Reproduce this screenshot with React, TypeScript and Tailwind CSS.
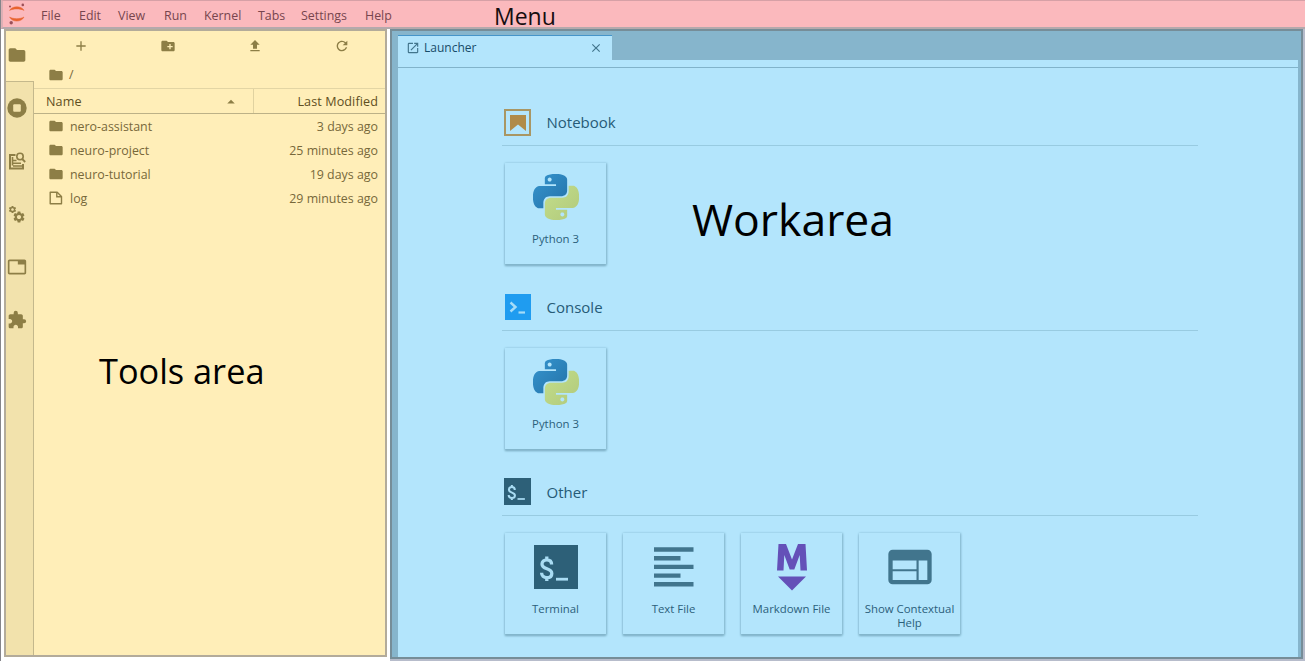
import React from "react";
import {
  MdAdd,
  MdArrowDropUp,
  MdClose,
  MdCreateNewFolder,
  MdExtension,
  MdFileUpload,
  MdFolder,
  MdLaunch,
  MdRefresh,
  MdSettings,
  MdTab,
  MdWeb,
} from "react-icons/md";

const menus = [
  { label: "File", cls: "w-[38px]" },
  { label: "Edit", cls: "w-[39px]" },
  { label: "View", cls: "w-[46px]" },
  { label: "Run", cls: "w-[40px]" },
  { label: "Kernel", cls: "w-[54px]" },
  { label: "Tabs", cls: "w-[43px]" },
  { label: "Settings", cls: "w-[64px]" },
  { label: "Help", cls: "w-[40px]" },
];

const files = [
  { name: "nero-assistant", when: "3 days ago", folder: true },
  { name: "neuro-project", when: "25 minutes ago", folder: true },
  { name: "neuro-tutorial", when: "19 days ago", folder: true },
  { name: "log", when: "29 minutes ago", folder: false },
];

function JupyterLogo() {
  return (
    <svg className="h-[22px] w-[18px]" viewBox="0 0 18 22">
      <path d="M1.600 7.400C4 2.600 13.600 2.600 16 7.400C12.500 5.400 5 5.400 1.600 7.400Z" fill="#e8632f" stroke="#e8632f" strokeWidth="0.500" />
      <path d="M1.600 14C4 19.400 13.600 19.400 16 14C12.500 16.200 5 16.200 1.600 14Z" fill="#e8632f" stroke="#e8632f" strokeWidth="0.500" />
      <circle cx="14.800" cy="1.900" r="1.300" fill="#9b5058" />
      <circle cx="2" cy="3.500" r="1" fill="#9b5058" />
      <circle cx="3.200" cy="19.700" r="1.700" fill="#9b5058" />
    </svg>
  );
}

function PythonLogo() {
  return (
    <svg className="h-[46px] w-[46px]" viewBox="0 0 24 24">
      <defs>
        <linearGradient id="pyBlue" x1="0" y1="0" x2="1" y2="1">
          <stop offset="0" stopColor="#3595cf" />
          <stop offset="1" stopColor="#2472a8" />
        </linearGradient>
        <linearGradient id="pyGreen" x1="0" y1="0" x2="1" y2="1">
          <stop offset="0" stopColor="#c3de8a" />
          <stop offset="1" stopColor="#b1c97c" />
        </linearGradient>
      </defs>
      <path
        fill="url(#pyBlue)"
        d="M14.25.18l.9.2.73.26.59.3.45.32.34.34.25.34.16.33.1.3.04.26.02.2-.01.13V8.5l-.05.63-.13.55-.21.46-.26.38-.3.31-.33.25-.35.19-.35.14-.33.1-.3.07-.26.04-.21.02H8.77l-.69.05-.59.14-.5.22-.41.27-.33.32-.27.35-.2.36-.15.37-.1.35-.07.32-.04.27-.02.21v3.06H3.17l-.21-.03-.28-.07-.32-.12-.35-.18-.36-.26-.36-.36-.35-.46-.32-.59-.28-.73-.21-.88-.14-1.05-.05-1.23.06-1.22.16-1.04.24-.87.32-.71.36-.57.4-.44.42-.33.42-.24.4-.16.36-.1.32-.05.24-.01h.16l.06.01h8.16v-.83H6.18l-.01-2.75-.02-.37.05-.34.11-.31.17-.28.25-.26.31-.23.38-.2.44-.18.51-.15.58-.12.64-.1.71-.06.77-.04.84-.02 1.27.05zm-6.3 1.98l-.23.33-.08.41.08.41.23.34.33.22.41.09.41-.09.33-.22.23-.34.08-.41-.08-.41-.23-.33-.33-.22-.41-.09-.41.09z"
      />
      <path
        fill="url(#pyGreen)"
        d="M21.04 6.11l.28.06.32.12.35.18.36.27.36.35.35.47.32.59.28.73.21.88.14 1.04.05 1.23-.06 1.23-.16 1.04-.24.86-.32.71-.36.57-.4.45-.42.33-.42.24-.4.16-.36.09-.32.05-.24.02-.16-.01h-8.22v.82h5.84l.01 2.76.02.36-.05.34-.11.31-.17.29-.25.25-.31.24-.38.2-.44.17-.51.15-.58.13-.64.09-.71.07-.77.04-.84.01-1.27-.04-1.07-.14-.9-.2-.73-.25-.59-.3-.45-.33-.34-.34-.25-.34-.16-.33-.1-.3-.04-.25-.02-.2.01-.13v-5.34l.05-.64.13-.54.21-.46.26-.38.3-.32.33-.24.35-.2.35-.14.33-.1.3-.06.26-.04.21-.02.13-.01h5.84l.69-.05.59-.14.5-.21.41-.28.33-.32.27-.35.2-.36.15-.36.1-.35.07-.32.04-.28.02-.21V6.07h2.09l.14.01zm-6.47 14.25l-.23.33-.08.41.08.41.23.33.33.23.41.08.41-.08.33-.23.23-.33.08-.41-.08-.41-.23-.33-.33-.23-.41-.08-.41.08z"
      />
    </svg>
  );
}

function NotebookIcon() {
  return (
    <svg className="size-[27px]" viewBox="0 0 27 27">
      <rect x="1" y="1" width="25" height="25" fill="none" stroke="#a99663" strokeWidth="2" />
      <path d="M6 6h16v16l-8-6.500L6 22z" fill="#b08b49" />
    </svg>
  );
}

function ConsoleIcon() {
  return (
    <svg className="size-[27px]" viewBox="0 0 27 27">
      <rect x="1" y="0" width="26" height="26" fill="#1f9cf0" />
      <path d="M6.500 8.500l5 4.500-5 4.500" fill="none" stroke="#a5dcf8" strokeWidth="2.400" />
      <path d="M14.500 18.500h6.500" stroke="#a5dcf8" strokeWidth="2.200" />
    </svg>
  );
}

function TerminalIcon({ className }: { className: string }) {
  return (
    <svg className={className} viewBox="0 0 44 44">
      <rect width="44" height="44" fill="#2d6078" />
      <path
        d="M17.600 19.600c0-3-1.900-4.800-4.800-4.800-2.900 0-4.800 1.700-4.800 4.200 0 6 9.800 3.600 9.800 9.400 0 2.700-2 4.200-5 4.200-3.200 0-5.200-1.700-5.200-4.800M12.800 11.500v3M12.800 32.500v3.500"
        fill="none"
        stroke="#a9dcf3"
        strokeWidth="3.300"
      />
      <path d="M22 34.200h12" stroke="#a9dcf3" strokeWidth="2.800" />
    </svg>
  );
}

function TextFileIcon() {
  return (
    <svg className="h-[44px] w-[44px]" viewBox="0 0 44 44">
      <path d="M2 4.500h39.500M2 13.200h26.500M2 21.900h39.500M2 30.600h26.500M2 39.300h39.500" stroke="#41758d" strokeWidth="4.400" />
    </svg>
  );
}

function MarkdownIcon() {
  return (
    <svg className="h-[48px] w-[44px]" viewBox="0 0 44 48">
      <path d="M7 27.500L8.500 1h7.500l6 15.500L28 1h7.500L37 27.500h-6.500l-.8-15.500-5.400 14.500h-4.600l-5.400-14.500-.8 15.500z" fill="#6450b8" />
      <path d="M8 33.500h28L22 47.500z" fill="#6450b8" />
    </svg>
  );
}

function FileIcon() {
  return (
    <svg className="size-[16px]" viewBox="0 0 16 16" fill="none" stroke="#8d7e46" strokeWidth="1.400">
      <path d="M2.200 2.200h7l4.300 4.300v7.300H2.200z" strokeLinejoin="round" />
      <path d="M8.800 2.500v4.300h4.500" />
    </svg>
  );
}

function PropertyIcon() {
  return (
    <svg className="size-[18px]" viewBox="0 0 18 18" fill="none" stroke="#8d7e46">
      <path d="M7.500 3H2v13.500h13v-4.500" strokeWidth="2" />
      <path d="M4.500 5v8.500M4 8.500h4.500M4 11.300h9M5 14h9" strokeWidth="1.600" />
      <circle cx="12" cy="4.500" r="3.200" strokeWidth="1.600" />
      <path d="M14.200 7l3 3" strokeWidth="1.800" />
    </svg>
  );
}

function SectionTitle({ icon, title }: { icon: React.ReactNode; title: string }) {
  return (
    <div className="flex h-[37px] items-start border-b border-[#98cbe1] pl-[2px]">
      {icon}
      <h2 className="ml-[15.500px] text-[15px] leading-[26px] text-[#265b77]">{title}</h2>
    </div>
  );
}

function Card({ icon, label }: { icon: React.ReactNode; label: string }) {
  return (
    <div className="flex h-[101px] w-[101px] flex-col items-center shadow-[0_0_2px_0.5px_#86b9cf,0_2px_2px_#7aabc1]">
      <div className="flex h-[68px] items-center justify-center">{icon}</div>
      <div className="mt-px w-[102px] text-center text-[11.400px] leading-[14px] text-[#2b607b]">{label}</div>
    </div>
  );
}

export default function App() {
  return (
    <div className="flex h-[661px] w-[1305px] flex-col overflow-hidden border-l border-[#85858a] bg-white font-['Open_Sans','Noto_Sans',sans-serif]">
      <header className="flex h-[29px] shrink-0 items-center border-b-2 border-l-2 border-t border-b-[#b5a9ac] border-l-[#ddb0b5] border-t-[#d6a0a6] bg-[#fbb9bd] pl-[5px]">
        <JupyterLogo />
        <nav className="ml-[15px] mt-[4px] flex text-[12.400px] text-[#77454e]">
          {menus.map((m) => (
            <span key={m.label} className={m.cls}>{m.label}</span>
          ))}
        </nav>
        <span className="ml-[89px] mt-[4px] text-[23px] leading-none text-[#160d10]">Menu</span>
      </header>

      <div className="flex min-h-0 flex-1">
        <aside className="ml-[3px] flex h-[628px] w-[383px] shrink-0 border-2 border-[#b3ab9a] bg-[#ffeeb8] text-[#77683a]">
          <div className="flex w-[28px] shrink-0 flex-col text-[#8d7e46]">
            <div className="flex h-[50px] items-center pb-[2px] pl-[1px]">
              <MdFolder className="size-[20px]" />
            </div>
            <div className="flex flex-1 flex-col gap-[33px] border-r border-t border-[#c4b88c] bg-[#f2e2ac] pl-[1px] pt-[16px]">
              <svg className="size-[20px]" viewBox="0 0 20 20">
                <circle cx="10" cy="10" r="9.700" fill="currentColor" />
                <rect x="6.200" y="6.200" width="7.600" height="7.600" rx="1" fill="#f2e2ac" />
              </svg>
              <div className="flex size-[20px] items-center justify-center"><PropertyIcon /></div>
              <div className="flex size-[20px]">
                <MdSettings className="ml-px mt-px size-[9px] shrink-0" />
                <MdSettings className="-ml-[5px] mt-[6px] size-[14px] shrink-0" />
              </div>
              <MdTab className="size-[20px]" />
              <MdExtension className="size-[20px]" />
            </div>
          </div>
          <div className="flex min-w-0 flex-1 flex-col text-[12.400px]">
            <div className="flex h-[30px] shrink-0 items-center justify-around pl-[3px] text-[#8d7e46]">
              <MdAdd className="size-[16px]" />
              <MdCreateNewFolder className="size-[16px]" />
              <MdFileUpload className="size-[16px]" />
              <MdRefresh className="size-[16px]" />
            </div>
            <div className="flex h-[27px] shrink-0 items-center pl-[14px]">
              <MdFolder className="size-[16px] text-[#8d7e46]" />
              <span className="ml-[5px] mt-[2px]">/</span>
            </div>
            <div className="flex h-[26px] shrink-0 items-center border-b border-t border-b-[#bcb187] border-t-[#e3d5a4] text-[12.600px] font-medium text-[#5e4f22]">
              <span className="flex-1 pl-[12px] pt-[2px] tracking-[0.1px]">Name</span>
              <MdArrowDropUp className="mr-[13px] mt-px size-[18px] text-[#8d7e46]" />
              <span className="h-full w-[132px] border-l border-[#e0d2a0] pr-[7px] text-right leading-[25px] tracking-[0.1px]">Last Modified</span>
            </div>
            {files.map((f) => (
              <div key={f.name} className="flex h-[24px] shrink-0 items-center pl-[14px] pr-[7px]">
                {f.folder ? <MdFolder className="size-[16px] text-[#8d7e46]" /> : <FileIcon />}
                <span className="ml-[6px] mt-[2px]">{f.name}</span>
                <span className="ml-auto mt-[2px]">{f.when}</span>
              </div>
            ))}
            <div className="pl-[65px] pt-[137px] text-[34.300px] leading-[48px] text-black">Tools area</div>
          </div>
        </aside>

        <div className="ml-[3px] flex-1 bg-[#b7bccb]">
          <main className="flex h-[630px] w-[913px] flex-col border-2 border-[#768d98] bg-[#86b5cc] pl-[6px] pr-[3px]">
            <div className="flex h-[29px] shrink-0 items-end">
              <div className="flex h-[25px] w-[214px] items-center border-t border-[#4595ca] bg-[#b3e5fc] pl-[8px] pr-[9px] text-[12px] text-[#174c69]">
                <MdLaunch className="size-[14px] text-[#42758c]" />
                <span className="ml-[4px] flex-1">Launcher</span>
                <MdClose className="size-[14px] text-[#42758c]" />
              </div>
            </div>
            <div className="h-[8px] shrink-0 border-b border-[#81b3ca] bg-[#b3e5fc]" />
            <div className="flex flex-1 flex-col bg-[#b3e5fc] pl-[104px] pr-[100px] pt-[41px]">
              <section className="h-[185px]">
                <SectionTitle icon={<NotebookIcon />} title="Notebook" />
                <div className="flex pl-[3px] pt-[17px]">
                  <Card icon={<PythonLogo />} label="Python 3" />
                  <div className="ml-[86px] mt-[26px] text-[44.500px] leading-[60px] text-black">Workarea</div>
                </div>
              </section>
              <section className="h-[185px]">
                <SectionTitle icon={<ConsoleIcon />} title="Console" />
                <div className="flex pl-[3px] pt-[17px]">
                  <Card icon={<PythonLogo />} label="Python 3" />
                </div>
              </section>
              <section>
                <SectionTitle icon={<TerminalIcon className="-mt-px size-[27px]" />} title="Other" />
                <div className="flex gap-[17px] pl-[3px] pt-[17px]">
                  <Card icon={<TerminalIcon className="size-[44px]" />} label="Terminal" />
                  <Card icon={<TextFileIcon />} label="Text File" />
                  <Card icon={<MarkdownIcon />} label="Markdown File" />
                  <Card icon={<MdWeb className="size-[52px] text-[#41758d]" />} label="Show Contextual Help" />
                </div>
              </section>
            </div>
          </main>
        </div>
      </div>
    </div>
  );
}
